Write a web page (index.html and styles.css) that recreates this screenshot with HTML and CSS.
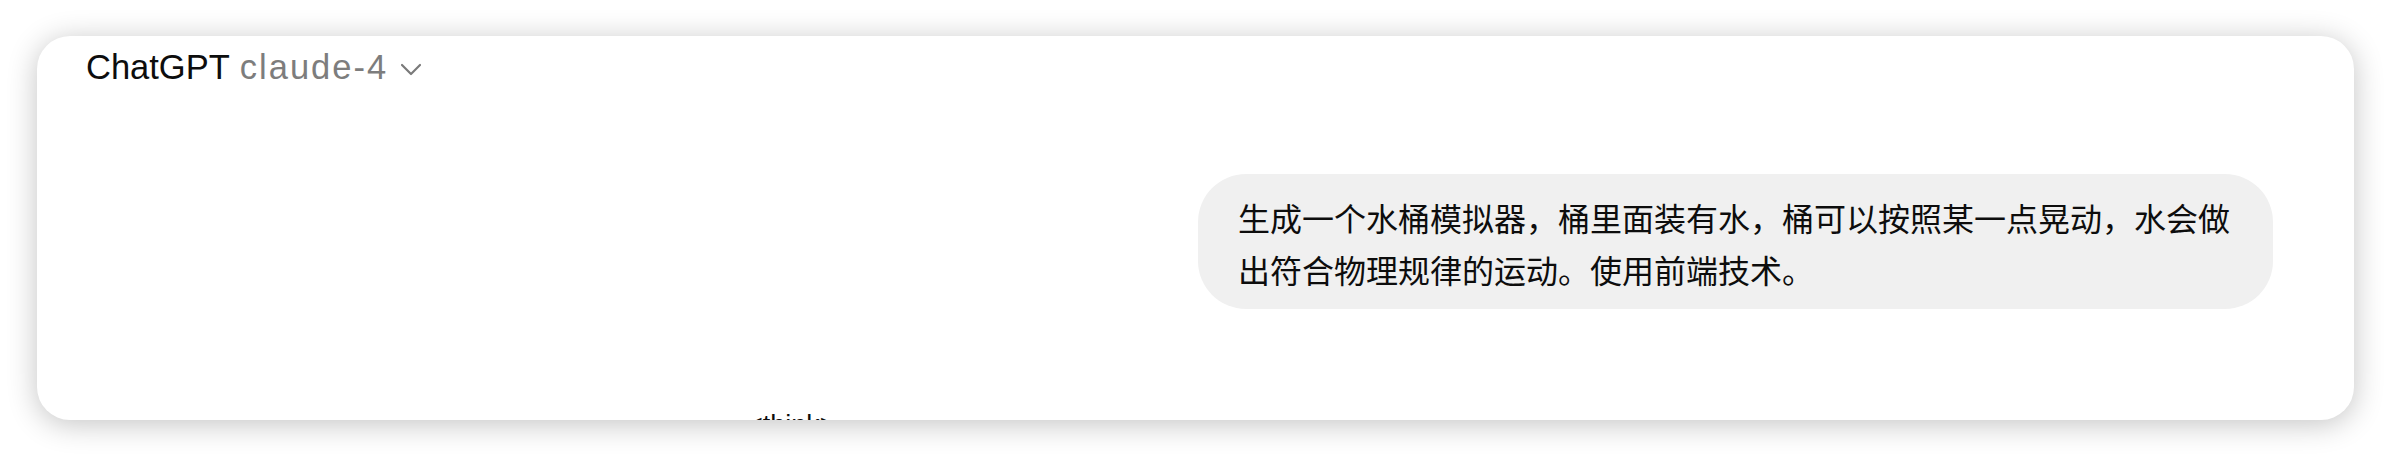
FILE: index.html
```html
<!DOCTYPE html>
<html lang="zh-CN">
<head>
<meta charset="utf-8">
<title>ChatGPT claude-4</title>
<link rel="stylesheet" href="styles.css">
</head>
<body>
<div class="card">
  <header class="header">
    <span class="brand">ChatGPT</span>
    <span class="model">claude-4</span>
    <svg class="chevron" width="22" height="13" viewBox="0 0 22 13" aria-hidden="true"><path d="M2 2 L11 11 L20 2" fill="none" stroke="#7a7a7a" stroke-width="2.2" stroke-linecap="round" stroke-linejoin="round"/></svg>
  </header>
  <div class="user-row">
    <div class="bubble">生成一个水桶模拟器，桶里面装有水，桶可以按照某一点晃动，水会做出符合物理规律的运动。使用前端技术。</div>
  </div>
  <div class="assistant">&lt;think&gt;</div>
</div>
</body>
</html>
```
FILE: styles.css
```css
html, body {
  margin: 0;
  padding: 0;
  background: #ffffff;
}
html {
  height: 456px;
}
body {
  min-height: 456px;
  box-sizing: border-box;
  padding: 36px 0 0 37px;
  font-family: "Liberation Sans", Arial, sans-serif;
  color: #0d0d0d;
}
.card {
  width: 2317px;
  height: 384px;
  background: #ffffff;
  border-radius: 33px;
  overflow: hidden;
  box-shadow: 0 4px 30px rgba(0, 0, 0, 0.24);
  box-sizing: border-box;
}
.header {
  display: flex;
  align-items: center;
  padding: 7px 0 0 49px;
  height: 55px;
  box-sizing: border-box;
  line-height: 48px;
  font-size: 34.5px;
}
.brand {
  color: #0d0d0d;
}
.model {
  color: #7d7d7d;
  margin-left: 10px;
  letter-spacing: 2px;
}
.chevron {
  margin-left: 12px;
  margin-top: 4px;
}
.user-row {
  display: flex;
  justify-content: flex-end;
  padding-right: 81px;
  margin-top: 83px;
}
.bubble {
  max-width: 1075px;
  box-sizing: border-box;
  padding: 17px 40px 14px 40px;
  background: #f0f0f0;
  border-radius: 48px;
  font-family: "Noto Sans CJK SC", "Noto Sans", sans-serif;
  font-size: 32px;
  line-height: 52px;
  color: #0d0d0d;
}
.assistant {
  margin-top: 98px;
  padding-left: 710px;
  font-size: 27px;
  line-height: 36px;
  color: #0d0d0d;
}
```
